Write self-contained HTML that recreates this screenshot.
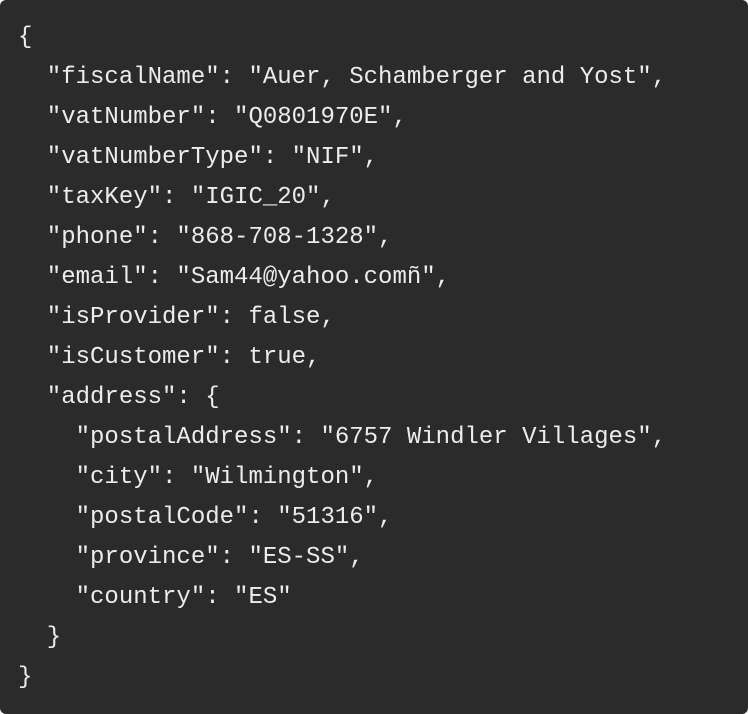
<!DOCTYPE html>
<html><head><meta charset="utf-8"><style>
html,body{margin:0;padding:0;background:#fff;}
.box{width:748px;height:714px;background:#2b2b2b;border-radius:6px;box-sizing:border-box;padding:18px 0 0 18px;}
pre{margin:0;font-family:"Liberation Mono",monospace;font-size:24px;line-height:40px;color:#ececec;}
</style></head><body><div class="box"><pre>{
  "fiscalName": "Auer, Schamberger and Yost",
  "vatNumber": "Q0801970E",
  "vatNumberType": "NIF",
  "taxKey": "IGIC_20",
  "phone": "868-708-1328",
  "email": "Sam44@yahoo.comñ",
  "isProvider": false,
  "isCustomer": true,
  "address": {
    "postalAddress": "6757 Windler Villages",
    "city": "Wilmington",
    "postalCode": "51316",
    "province": "ES-SS",
    "country": "ES"
  }
}</pre></div></body></html>
